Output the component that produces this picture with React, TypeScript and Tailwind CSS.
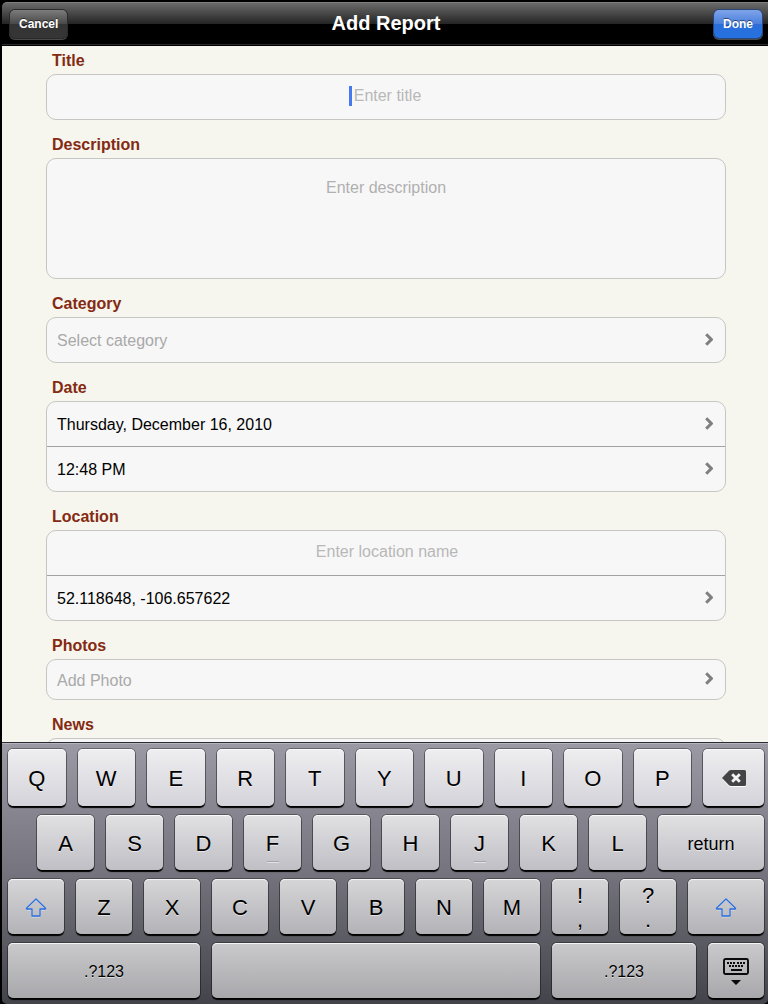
import type { ReactNode } from 'react';

function Chevron() {
  return (
    <svg width="8" height="13" viewBox="0 0 8 13" fill="none" className="mb-0.5 shrink-0" aria-hidden="true">
      <path d="M1.2 1.2 6.3 6.5 1.2 11.8" stroke="#7f7f7f" strokeWidth="3" />
    </svg>
  );
}

function ShiftIcon() {
  return (
    <svg width="22" height="20" viewBox="0 0 22 20" fill="none" aria-hidden="true">
      <path d="M11 2 1.5 11.2V12H7v7h8v-7h5.500v-.8Z" stroke="#ffffff" strokeOpacity=".5" strokeLinejoin="round" />
      <path d="M11 1 1.500 10.200V11H7v7h8v-7h5.500v-.8Z" stroke="#2a6fe0" strokeWidth="1.300" strokeLinejoin="round" />
    </svg>
  );
}

function DeleteIcon() {
  return (
    <svg width="24" height="17" viewBox="0 0 24 17" aria-hidden="true">
      <path d="M0 9 7 1.800Q8 1 9 1h13.500Q24 1 24 2.500v13q0 1.500-1.500 1.500H9q-1 0-2-.8Z" fill="#ffffff" />
      <path d="M0 8 7 .8Q8 0 9 0h13.500Q24 0 24 1.500v13q0 1.500-1.500 1.500H9q-1 0-2-.8Z" fill="#444446" />
      <path d="m10.200 4.200 7.600 7.600m0-7.600-7.600 7.600" stroke="#f4f4f6" strokeWidth="2.800" />
    </svg>
  );
}

function HideKeyboardIcon() {
  return (
    <svg width="26" height="27" viewBox="0 0 26 27" aria-hidden="true">
      <rect x="1" y="1" width="24" height="15" rx="1.500" fill="none" stroke="#0a0a0a" strokeWidth="1.900" />
      <path
        d="M4 4h2v2H4zM7 4h2v2H7zM10 4h2v2h-2zM14 4h2v2h-2zM17 4h2v2h-2zM20 4h2v2h-2zM6 7h2v2H6zM9 7h2v2H9zM12 7h2v2h-2zM15 7h2v2h-2zM18 7h2v2h-2zM8 11h11v2H8zM8 22h10l-5 5z"
        fill="#0a0a0a"
      />
    </svg>
  );
}

function Section({ title, htmlFor, children }: { title: string; htmlFor: string; children: ReactNode }) {
  return (
    <section>
      <label htmlFor={htmlFor} className="block pt-0.5 pl-1.5 text-base leading-[26px] font-bold text-[#842a12]">
        {title}
      </label>
      <div className="divide-y divide-[#a2a2a2] rounded-[10px] border border-[#c6c6c2] bg-[#f7f7f7]">{children}</div>
    </section>
  );
}

function RowButton({ id, text, muted, short }: { id: string; text: string; muted?: boolean; short?: boolean }) {
  return (
    <button
      id={id}
      type="button"
      className={`flex w-full items-center justify-between pr-3 pl-2.5 text-left text-base ${short ? 'h-[39px]' : 'h-11'} ${muted ? 'text-[#a9a9a9]' : 'text-black'}`}
    >
      <span className="pt-0.5">{text}</span>
      <Chevron />
    </button>
  );
}

const keyTones = [
  'h-[57px] from-[#eeeef0] to-[#d4d3da]',
  'h-[55px] from-[#e1e1e3] to-[#c0bfc5]',
  'h-[55px] from-[#d6d6d8] to-[#b3b2b7]',
  'h-[55px] from-[#cacacc] to-[#a8a8ac]',
];

function Key({ row, size = 'flex-1', label, children }: { row: number; size?: string; label?: string; children?: ReactNode }) {
  return (
    <button
      type="button"
      aria-label={label}
      className={`relative flex min-w-0 flex-col items-center justify-center rounded-[5px] bg-linear-to-b pt-0.5 text-[22px] leading-7 text-black shadow-[inset_0_1px_0_#ffffffd0,0_0_0_1px_#00000058,0_2px_1px_#000000] [text-shadow:0_1px_0_#ffffff90] ${size} ${keyTones[row]}`}
    >
      {children}
    </button>
  );
}

function Letters({ row, letters }: { row: number; letters: string }) {
  return (
    <>
      {letters.split('').map((c) => (
        <Key key={c} row={row}>
          {c}
          {(c === 'F' || c === 'J') && (
            <span className="absolute bottom-[7px] h-0.5 w-3 border-b border-[#e2e2e5] bg-[#a5a4aa]" />
          )}
        </Key>
      ))}
    </>
  );
}

function Keyboard() {
  return (
    <div className="flex shrink-0 flex-col gap-[9px] rounded-b-[5px] border-t border-[#2c2b33] bg-linear-to-b from-[#9b99a4] via-[#75747e] to-[#43444b] pt-1.5 pr-1 pb-1.5 pl-1.5 shadow-[inset_0_1px_0_#b5b4bd]">
      <div className="flex gap-3">
        <Letters row={0} letters="QWERTYUIOP" />
        <Key row={0} size="w-[61px]" label="Delete">
          <DeleteIcon />
        </Key>
      </div>
      <div className="flex gap-3 pl-[29px]">
        <Letters row={1} letters="ASDFGHJKL" />
        <Key row={1} size="w-[106px]">
          <span className="text-lg">return</span>
        </Key>
      </div>
      <div className="flex gap-3">
        <Key row={2} label="Shift">
          <ShiftIcon />
        </Key>
        <Letters row={2} letters="ZXCVBNM" />
        <Key row={2}>
          <span className="leading-6">!</span>
          <span className="leading-6">,</span>
        </Key>
        <Key row={2}>
          <span className="leading-6">?</span>
          <span className="leading-6">.</span>
        </Key>
        <Key row={2} size="w-[76px]" label="Shift">
          <ShiftIcon />
        </Key>
      </div>
      <div className="flex gap-3">
        <Key row={3} size="w-48">
          <span className="text-base">.?123</span>
        </Key>
        <Key row={3} label="Space" />
        <Key row={3} size="w-36">
          <span className="text-base">.?123</span>
        </Key>
        <Key row={3} size="w-14" label="Hide keyboard">
          <HideKeyboardIcon />
        </Key>
      </div>
    </div>
  );
}

function BarButton({ tone, children }: { tone: string; children: ReactNode }) {
  return (
    <button
      type="button"
      className={`h-7 rounded-[5px] text-xs font-bold text-white [text-shadow:0_-1px_0_#00000080] ${tone}`}
    >
      {children}
    </button>
  );
}

export default function App() {
  return (
    <div className="flex h-screen flex-col bg-black pt-0.5 pl-0.5 font-['Liberation_Sans',Arial,sans-serif]">
      <header className="grid h-11 shrink-0 grid-cols-[1fr_auto_1fr] items-center rounded-tl-[5px] border-t border-[#808080] bg-[linear-gradient(#6a6a6a_0,#242424_21px,#000_21px,#000_41px,#2b2b2b_41px,#2b2b2b_42px,#000_42px)] pr-1.5 pb-0.5 pl-2">
        <div className="flex">
          <BarButton tone="px-[9px] bg-[linear-gradient(#7c7c7c,#484848_50%,#333_50%,#363636)] shadow-[0_0_0_1px_#2a2a2a,0_1px_0_1px_#4a4a4a]">
            Cancel
          </BarButton>
        </div>
        <h1 className="pb-0.5 text-xl font-bold text-white">Add Report</h1>
        <div className="flex justify-end">
          <BarButton tone="px-[9px] bg-[linear-gradient(#7fa3e8,#4a80dd_50%,#2a6edb_50%,#2572e0)] shadow-[0_0_0_1px_#29467c,0_1px_0_1px_#4a4a4a]">
            Done
          </BarButton>
        </div>
      </header>
      <main className="flex min-h-0 flex-1 flex-col gap-2.5 overflow-hidden bg-[#f6f5ee] pr-[42px] pl-11">
        <Section title="Title" htmlFor="title">
          <div className="flex h-11 items-center justify-center gap-0.5 pr-0.5 pb-0.5">
            <span className="h-5 w-[3px] bg-[#4579f2]" />
            <input
              id="title"
              type="text"
              placeholder="Enter title"
              className="field-sizing-content max-w-full bg-transparent text-base text-black outline-none placeholder:text-[#b8b8b8]"
            />
          </div>
        </Section>
        <Section title="Description" htmlFor="description">
          <textarea
            id="description"
            placeholder="Enter description"
            className="block h-[119px] w-full resize-none bg-transparent px-2.5 pt-[17px] text-center text-base text-black outline-none placeholder:text-[#b0b0b0]"
          />
        </Section>
        <Section title="Category" htmlFor="category">
          <RowButton id="category" text="Select category" muted />
        </Section>
        <Section title="Date" htmlFor="date">
          <div>
            <RowButton id="date" text="Thursday, December 16, 2010" />
          </div>
          <div>
            <RowButton id="time" text="12:48 PM" />
          </div>
        </Section>
        <Section title="Location" htmlFor="location">
          <div className="flex h-[45px] pb-0.5">
            <input
              id="location"
              type="text"
              placeholder="Enter location name"
              className="w-full bg-transparent pr-2.5 pl-3 text-center text-base text-black outline-none placeholder:text-[#b8b8b8]"
            />
          </div>
          <div>
            <RowButton id="coordinates" text="52.118648, -106.657622" />
          </div>
        </Section>
        <Section title="Photos" htmlFor="photos">
          <RowButton id="photos" text="Add Photo" muted short />
        </Section>
        <Section title="News" htmlFor="news">
          <input id="news" type="text" className="block h-11 w-full bg-transparent px-2.5 text-base outline-none" />
        </Section>
      </main>
      <Keyboard />
    </div>
  );
}
